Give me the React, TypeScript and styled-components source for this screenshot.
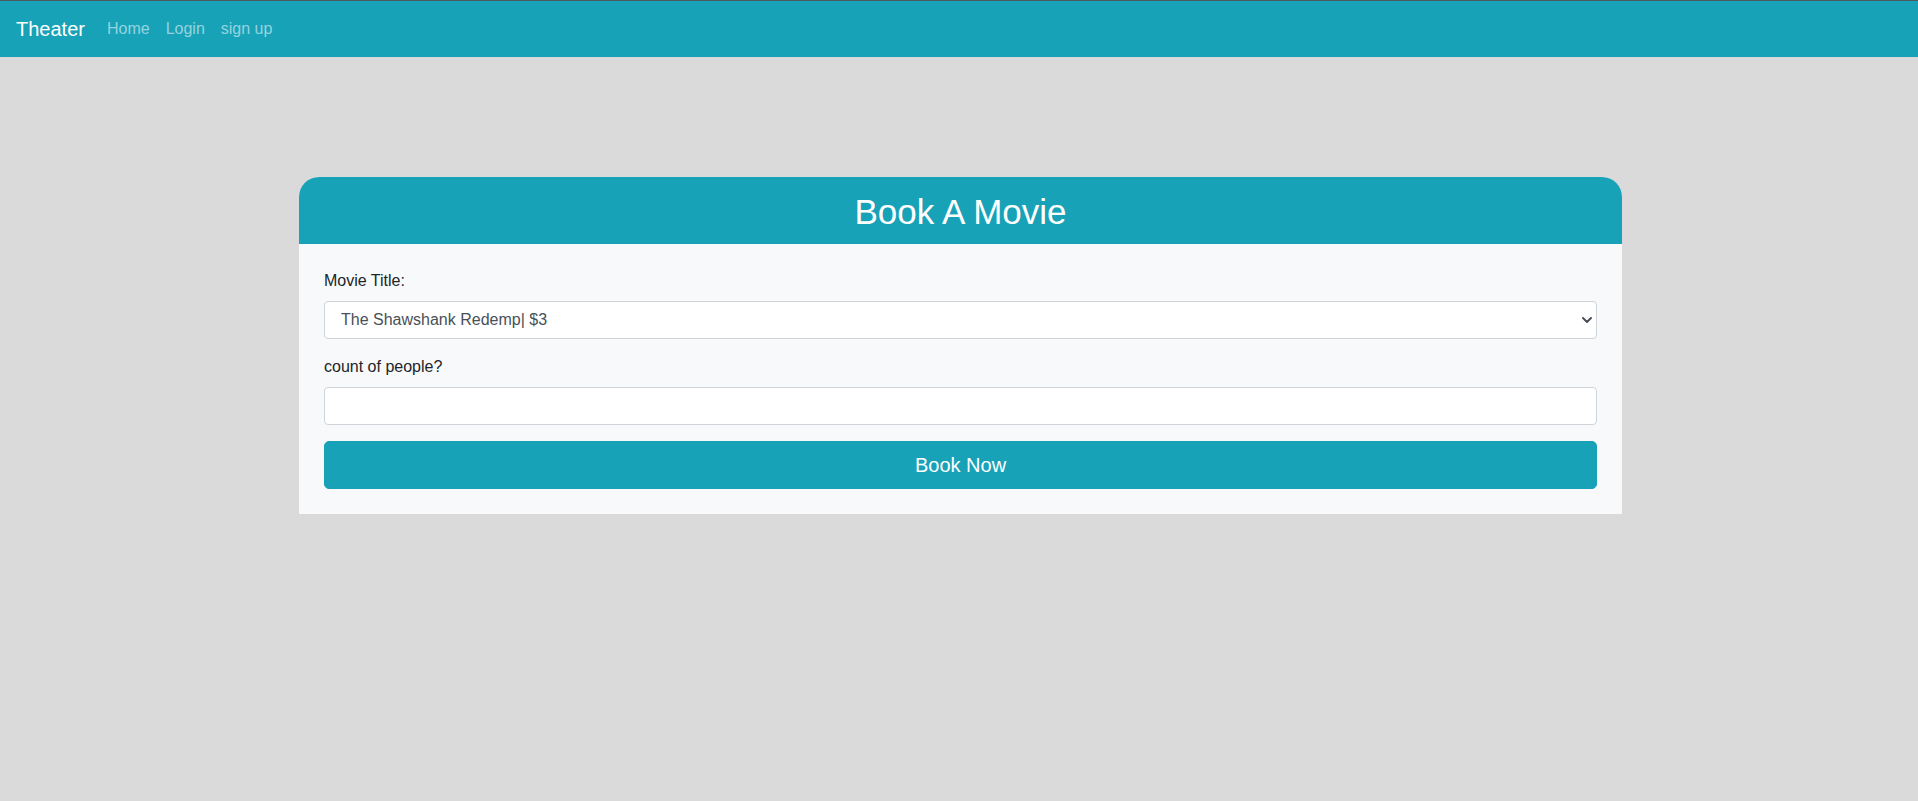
import React from "react";
import styled, { createGlobalStyle } from "styled-components";

const GlobalStyle = createGlobalStyle`
  * { box-sizing: border-box; }
  html, body {
    margin: 0;
    padding: 0;
    background: #dadada;
    font-family: "Liberation Sans", Arial, sans-serif;
    color: #212529;
    font-size: 16px;
    line-height: 1.5;
  }
`;

const Page = styled.div`
  min-height: 801px;
  background: #dadada;
`;

const NavBar = styled.nav`
  display: flex;
  align-items: center;
  height: 57px;
  padding: 8px 16px;
  background: #17a2b8;
  border-top: 1px solid #4d5a60;
`;

const Brand = styled.a`
  font-size: 20px;
  line-height: 30px;
  padding: 5px 0;
  margin-right: 14px;
  color: #ffffff;
  text-decoration: none;
  cursor: pointer;
`;

const NavLinks = styled.div`
  display: flex;
  align-items: center;
`;

const NavLink = styled.a`
  padding: 8px;
  font-size: 16px;
  line-height: 24px;
  color: rgba(255, 255, 255, 0.55);
  text-decoration: none;
  cursor: pointer;
`;

const Card = styled.section`
  width: 1323px;
  margin: 120px 0 0 299px;
  background: #f8f9fa;
  border-radius: 20px 20px 0 0;
  overflow: hidden;
`;

const CardHeader = styled.header`
  height: 67px;
  padding-top: 3px;
  display: flex;
  align-items: center;
  justify-content: center;
  background: #17a2b8;
`;

const Title = styled.h1`
  margin: 0;
  font-size: 35px;
  font-weight: 400;
  line-height: 1.2;
  color: #ffffff;
`;

const CardBody = styled.form`
  padding: 25px;
  display: flex;
  flex-direction: column;
`;

const Field = styled.div`
  display: flex;
  flex-direction: column;
  margin-bottom: 16px;
`;

const Label = styled.label`
  font-size: 16px;
  line-height: 24px;
  margin-bottom: 8px;
  color: #212529;
`;

const SelectWrap = styled.div`
  position: relative;
`;

const Select = styled.select`
  width: 100%;
  height: 38px;
  padding: 6px 28px 6px 16px;
  font-family: inherit;
  font-size: 16px;
  line-height: 24px;
  color: #495057;
  background: #ffffff;
  border: 1px solid #ced4da;
  border-radius: 4px;
  appearance: none;
  -webkit-appearance: none;
  outline: none;
`;

const Chevron = styled.svg`
  position: absolute;
  right: 4px;
  top: 50%;
  width: 12px;
  height: 8px;
  transform: translateY(-50%);
  pointer-events: none;
`;

const Input = styled.input`
  width: 100%;
  height: 38px;
  padding: 6px 12px;
  font-family: inherit;
  font-size: 16px;
  line-height: 24px;
  color: #495057;
  background: #ffffff;
  border: 1px solid #ced4da;
  border-radius: 4px;
  outline: none;
`;

const Button = styled.button`
  width: 100%;
  height: 48px;
  padding: 8px 16px;
  font-family: inherit;
  font-size: 20px;
  line-height: 30px;
  color: #ffffff;
  background: #17a2b8;
  border: 1px solid #17a2b8;
  border-radius: 5px;
  cursor: pointer;
`;

export default function App() {
  return (
    <Page>
      <GlobalStyle />
      <NavBar>
        <Brand>Theater</Brand>
        <NavLinks>
          <NavLink>Home</NavLink>
          <NavLink>Login</NavLink>
          <NavLink>sign up</NavLink>
        </NavLinks>
      </NavBar>
      <Card>
        <CardHeader>
          <Title>Book A Movie</Title>
        </CardHeader>
        <CardBody onSubmit={(e) => e.preventDefault()}>
          <Field>
            <Label htmlFor="movie">Movie Title:</Label>
            <SelectWrap>
              <Select id="movie" defaultValue="1">
                <option value="1">The Shawshank Redemp| $3</option>
              </Select>
              <Chevron viewBox="0 0 12 8">
                <path
                  d="M2 2l4 4 4-4"
                  fill="none"
                  stroke="#4a4f57"
                  strokeWidth="2"
                  strokeLinecap="round"
                  strokeLinejoin="round"
                />
              </Chevron>
            </SelectWrap>
          </Field>
          <Field>
            <Label htmlFor="count">count of people?</Label>
            <Input id="count" type="text" />
          </Field>
          <Button type="submit">Book Now</Button>
        </CardBody>
      </Card>
    </Page>
  );
}
